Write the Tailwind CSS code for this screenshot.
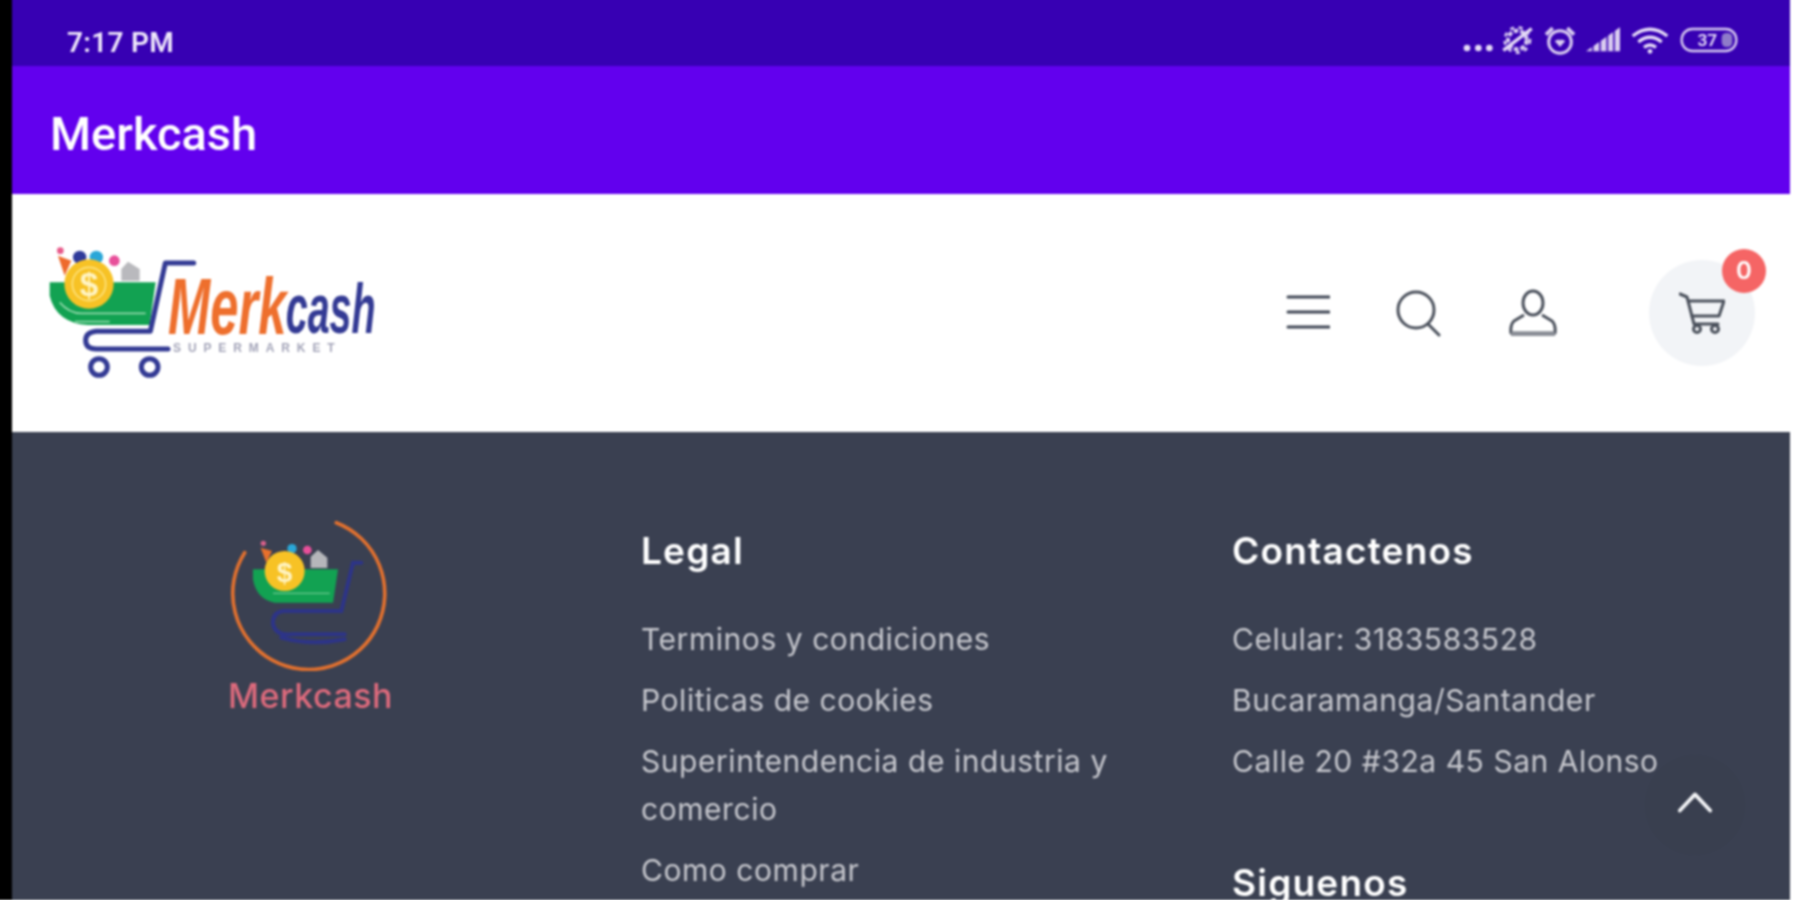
<!DOCTYPE html>
<html lang="en">
<head>
    <meta charset="UTF-8">
    <title>Merkcash</title>
    <script src="https://cdn.jsdelivr.net/npm/@tailwindcss/browser@4"></script>
</head>
<body class="bg-white overflow-hidden">
<div class="flex h-[903px] -mt-[3px] -ml-[3px] overflow-hidden blur-[0.8px]">
    <div class="w-[15px] shrink-0 bg-black"></div>
    <main class="w-[1778px] shrink-0 h-[903px] overflow-hidden relative">
        <!-- Status bar -->
        <div class="h-[69px] bg-[#3700b3] flex items-center justify-between pl-[55px] pr-[50px] pt-[22px] text-[#efe8fb]">
            <span class="font-['Roboto',sans-serif] font-semibold text-[28px] leading-none tracking-[0.3px]">7:17 PM</span>
            <svg class="w-[280px] h-[37px] -mt-[5px]" viewBox="120 70 840 111" fill="none" stroke="#d9ccf0">
                <circle cx="141" cy="148" r="10" fill="#e6dcf7" stroke="none"/>
                <circle cx="175" cy="148" r="10" fill="#e6dcf7" stroke="none"/>
                <circle cx="208" cy="148" r="10" fill="#e6dcf7" stroke="none"/>
                <circle cx="292" cy="124" r="28" stroke-width="12" stroke-dasharray="14 6"/>
                <circle cx="292" cy="124" r="38" stroke-width="8" stroke-dasharray="12 14"/>
                <path d="M250 155 L335 90" stroke-width="10" stroke="#e6dcf7"/>
                <circle cx="420" cy="130" r="34" stroke-width="9"/>
                <path d="M378 108 L398 88 M462 108 L442 88" stroke-width="11"/>
                <path d="M420 145 L404 127 Q420 118 420 127 Q420 118 436 127 Z" fill="#d9ccf0" stroke="none"/>
                <path d="M498 158 L600 86 V158 Z" fill="#d9ccf0" stroke="none"/>
                <path d="M518 158 V140 M540 158 V125 M562 158 V108 M582 158 V95" stroke="#3700b3" stroke-width="5"/>
                <path d="M638 112 Q690 72 742 112 M655 130 Q690 102 725 130 M672 146 Q690 132 708 146" stroke-width="10" stroke="#e6dcf7"/>
                <circle cx="690" cy="158" r="7" fill="#e6dcf7" stroke="none"/>
                <rect x="785" y="91" width="164" height="66" rx="32" stroke-width="7"/>
                <rect x="905" y="103" width="32" height="42" rx="14" fill="#8f7bc9" stroke="none"/>
                <text x="862" y="142" text-anchor="middle" class="font-['Roboto',sans-serif] font-semibold text-[52px]" fill="#e6dcf7" stroke="none">37</text>
            </svg>
        </div>

        <!-- App bar -->
        <div class="h-[128px] bg-[#6200ee] flex items-center pl-[38px] pt-[7px]">
            <h1 class="font-['Roboto',sans-serif] font-medium text-[47px] text-white leading-none">Merkcash</h1>
        </div>

        <!-- Site header -->
        <header class="h-[238px] bg-white flex items-start justify-between">
            <svg class="w-[330px] h-[140px] mt-[50px] ml-[36px]" viewBox="145 75 990 420" fill="none">
                <circle cx="182" cy="95" r="10" fill="#e85a8a"/>
                <path d="M175 110 L215 125 L195 170 Z" fill="#ee6a2c"/>
                <circle cx="240" cy="115" r="20" fill="#2f3a9a"/>
                <circle cx="290" cy="115" r="20" fill="#2aa7d8"/>
                <circle cx="344" cy="125" r="16" fill="#e84f9a"/>
                <path d="M365 185 V150 L385 128 L420 150 V185 Z" fill="#b9b9bd"/>
                <path d="M150 190 H468 L450 318 H265 Q170 312 150 230 Z" fill="#12a252"/>
                <path d="M180 250 Q210 285 250 283 H438 M225 308 H330" stroke="#8fd7a8" stroke-width="5"/>
                <circle cx="268" cy="195" r="74" fill="#f7c225"/>
                <circle cx="268" cy="195" r="50" stroke="#fde27d" stroke-width="5"/>
                <text x="268" y="232" text-anchor="middle" class="font-['Liberation_Sans',sans-serif] font-bold text-[100px]" fill="#fff4c4">$</text>
                <path d="M582 132 H497 L452 337 H290 Q258 340 258 364 Q258 390 290 390 H505" stroke="#333a94" stroke-width="15" stroke-linecap="round" stroke-linejoin="round"/>
                <circle cx="298" cy="444" r="25" stroke="#333a94" stroke-width="15"/>
                <circle cx="450" cy="444" r="25" stroke="#333a94" stroke-width="15"/>
                <text x="505" y="345" textLength="355" lengthAdjust="spacingAndGlyphs" class="font-['Liberation_Sans',sans-serif] font-bold italic text-[240px]" fill="#ee6f2d">Merk</text>
                <text x="858" y="342" textLength="270" lengthAdjust="spacingAndGlyphs" class="font-['Liberation_Sans',sans-serif] font-bold italic text-[210px]" fill="#333a94">cash</text>
                <text x="520" y="400" textLength="485" class="font-['Liberation_Sans',sans-serif] font-bold text-[36px]" fill="#a3a4b8">SUPERMARKET</text>
            </svg>

            <div class="flex items-start mt-[66px] mr-[35px]">
                <svg class="w-[44px] h-[40px] mt-[33px]" viewBox="0 0 44 40" fill="none" stroke="#3f4654" stroke-width="3" stroke-linecap="round">
                    <path d="M2 4 H43 M2 19 H43 M2 34 H43"/>
                </svg>
                <svg class="w-[46px] h-[48px] ml-[66px] mt-[29px]" viewBox="0 0 46 48" fill="none" stroke="#4b515c" stroke-width="3" stroke-linecap="round">
                    <circle cx="20" cy="21" r="18"/>
                    <path d="M32 35 L43 46"/>
                </svg>
                <svg class="w-[48px] h-[48px] ml-[67px] mt-[29px]" viewBox="0 0 48 48" fill="none" stroke="#4b515c" stroke-width="3" stroke-linejoin="round">
                    <ellipse cx="24" cy="14" rx="10" ry="12"/>
                    <path d="M15 26 L5 32 Q1 36 2 44 H46 Q47 36 43 32 L33 26"/>
                    <path d="M2 45 H46" stroke-width="4" stroke="#8a8e96"/>
                </svg>
                <!-- Cart with badge -->
                <div class="relative w-[106px] h-[106px] rounded-full bg-[#f2f4f7] ml-[92px] flex items-center justify-center">
                    <svg class="w-[46px] h-[42px]" viewBox="0 0 46 42" fill="none" stroke="#4b515c" stroke-width="3" stroke-linejoin="round" stroke-linecap="round">
                        <path d="M1 2 L8 5 L15 32 H39"/>
                        <path d="M10 9 H45 L40 24 H13"/>
                        <circle cx="18" cy="37" r="3.5"/>
                        <circle cx="36" cy="37" r="3.5"/>
                    </svg>
                    <span class="absolute -top-[11px] -right-[11px] w-[44px] h-[44px] rounded-full bg-[#f56565] text-white font-['Inter',sans-serif] font-semibold text-[24px] flex items-center justify-center">0</span>
                </div>
            </div>
        </header>

        <!-- Footer -->
        <footer class="h-[468px] bg-[#3a4051] grid grid-cols-[629px_591px_1fr] font-['Inter',sans-serif] text-[#c6c7cd] text-[30px] tracking-[0.55px] leading-[48px]">
            <div class="flex flex-col items-center pt-[84px] pl-[4px] pr-[36px]">
                <svg class="w-[165px] h-[155px]" viewBox="80 40 495 465" fill="none">
                    <path d="M405 60 A228 228 0 1 1 130 150" stroke="#e0702f" stroke-width="11" stroke-linecap="round"/>
                    <circle cx="186" cy="122" r="8" fill="#d8608a"/>
                    <path d="M178 135 L212 145 L195 180 Z" fill="#e8702c"/>
                    <circle cx="272" cy="138" r="14" fill="#2aa7d8"/>
                    <circle cx="318" cy="142" r="13" fill="#e84f9a"/>
                    <path d="M328 196 V162 L350 142 L378 165 V196 Z" fill="#b5b6ba"/>
                    <path d="M155 200 H410 L395 300 H220 Q165 290 155 230 Z" fill="#12a252"/>
                    <path d="M215 272 H385" stroke="#6cc98f" stroke-width="4"/>
                    <circle cx="250" cy="205" r="60" fill="#f7c225"/>
                    <text x="250" y="238" text-anchor="middle" class="font-['Liberation_Sans',sans-serif] font-bold text-[84px]" fill="#fff4c4">$</text>
                    <path d="M480 180 H455 L420 325 H245 Q212 330 215 365 Q225 400 270 395 H430 M240 405 Q330 430 430 410" stroke="#2d3488" stroke-width="12" stroke-linecap="round"/>
                </svg>
                <span class="text-[#dc6a7c] text-[34px] tracking-[0.5px] leading-[44px] font-medium mt-[3px]">Merkcash</span>
            </div>
            <div class="pt-[95px] pr-[60px]">
                <h3 class="text-white font-semibold text-[37px] tracking-[1.2px] mb-[40px]">Legal</h3>
                <ul class="flex flex-col gap-[13px]">
                    <li>Terminos y condiciones</li>
                    <li>Politicas de cookies</li>
                    <li>Superintendencia de industria y comercio</li>
                    <li>Como comprar</li>
                </ul>
            </div>
            <div class="pt-[95px]">
                <h3 class="text-white font-semibold text-[37px] tracking-[1.2px] mb-[40px]">Contactenos</h3>
                <ul class="flex flex-col gap-[13px]">
                    <li>Celular: 3183583528</li>
                    <li>Bucaramanga/Santander</li>
                    <li>Calle 20 #32a 45 San Alonso</li>
                </ul>
                <h3 class="text-white font-semibold text-[37px] tracking-[1.2px] mt-[74px]">Siguenos</h3>
            </div>
        </footer>

        <!-- Back to top -->
        <div class="absolute left-[1633px] top-[758px] w-[100px] h-[100px] rounded-full bg-[#393f4f] flex items-center justify-center">
            <svg class="w-[36px] h-[24px] -mt-[6px]" viewBox="0 0 38 24" fill="none" stroke="#f3f4f6" stroke-width="4" stroke-linecap="round" stroke-linejoin="round">
                <path d="M3 21 L19 4 L35 21"/>
            </svg>
        </div>
    </main>
</div>
</body>
</html>
